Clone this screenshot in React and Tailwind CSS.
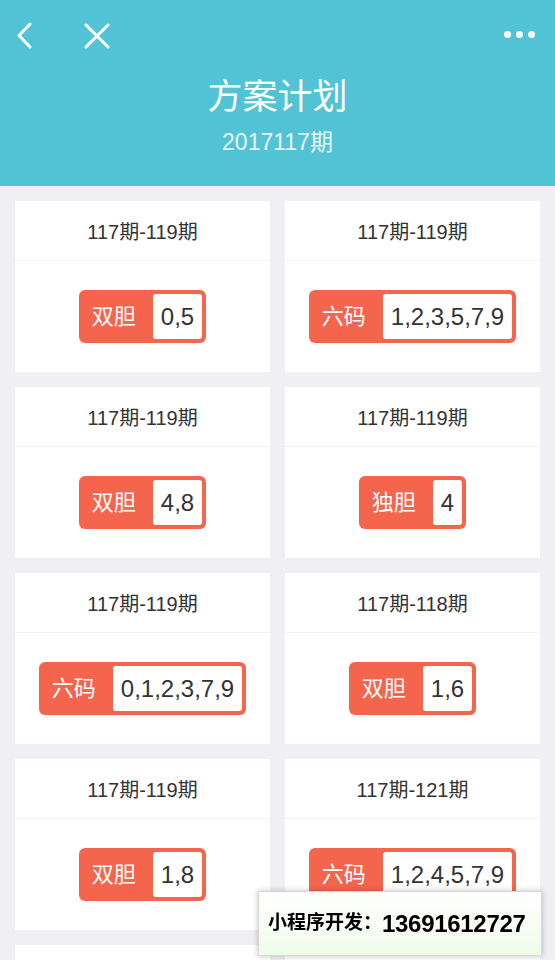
const plans = [
  { qi: "117期-119期", type: "双胆", nums: "0,5" },
  { qi: "117期-119期", type: "六码", nums: "1,2,3,5,7,9" },
  { qi: "117期-119期", type: "双胆", nums: "4,8" },
  { qi: "117期-119期", type: "独胆", nums: "4" },
  { qi: "117期-119期", type: "六码", nums: "0,1,2,3,7,9" },
  { qi: "117期-118期", type: "双胆", nums: "1,6" },
  { qi: "117期-119期", type: "双胆", nums: "1,8" },
  { qi: "117期-121期", type: "六码", nums: "1,2,4,5,7,9" },
  { qi: "117期-119期", type: "独胆", nums: "7" },
  { qi: "117期-119期", type: "双胆", nums: "2,6" },
];

function Badge({ type, nums }) {
  return (
    <div className="flex items-stretch rounded-[6px] bg-[#f5654e] p-[4px] pl-0">
      <span className="flex items-center pl-[13px] pr-[17px] text-[22px] text-white">
        {type}
      </span>
      <span className="flex h-[45px] items-center rounded-[3px] bg-white px-[8px] text-[24px] text-[#333]">
        {nums}
      </span>
    </div>
  );
}

function Card({ qi, type, nums }) {
  return (
    <div className="bg-white">
      <div className="flex h-[60px] items-center justify-center border-b border-[#f2f2f2] pt-[3px] text-[20px] text-[#333]">
        {qi}
      </div>
      <div className="flex h-[111px] items-center justify-center">
        <Badge type={type} nums={nums} />
      </div>
    </div>
  );
}

export default function App() {
  return (
    <div
      className="relative min-h-screen bg-[#efeff4]"
      style={{ fontFamily: '"Liberation Sans", "Noto Sans CJK SC", sans-serif' }}
    >
      <header className="h-[186px] bg-[#52c3d4] text-white">
        <div className="flex h-[70px] items-start justify-between px-[15px] pt-[22px]">
          <div className="flex items-center gap-[48px]">
            <svg width="20" height="28" viewBox="0 0 20 28" fill="none">
              <path d="M15 2 L4 13.5 L15 25" stroke="white" strokeWidth="3" strokeLinecap="round" strokeLinejoin="round" />
            </svg>
            <svg width="28" height="26" viewBox="0 0 28 26" fill="none">
              <path d="M3 2 L25 24 M25 2 L3 24" stroke="white" strokeWidth="3" strokeLinecap="round" />
            </svg>
          </div>
          <div className="mr-[5px] mt-[9px] flex gap-[5px]">
            <span className="h-[7px] w-[7px] rounded-full bg-white" />
            <span className="h-[7px] w-[7px] rounded-full bg-white" />
            <span className="h-[7px] w-[7px] rounded-full bg-white" />
          </div>
        </div>
        <div className="flex flex-col items-center">
          <h1 className="text-[35px] leading-[54px]">方案计划</h1>
          <p className="mt-[1px] text-[23px] text-white/85">2017117期</p>
        </div>
      </header>

      <main className="grid grid-cols-2 gap-[15px] px-[15px] pt-[15px] pb-[15px]">
        {plans.map((p, i) => (
          <Card key={i} {...p} />
        ))}
      </main>

      <div className="fixed left-[258px] top-[891px] flex h-[65px] w-[284px] items-center border border-[#d9d9d9] bg-gradient-to-b from-white to-[#effbe9] pl-[9px] shadow-[0_0_6px_rgba(0,0,0,0.25)]">
        <span className="text-[19px] font-bold text-black">小程序开发：</span>
        <span className="text-[24px] font-bold tracking-[-0.3px] text-black">13691612727</span>
      </div>
    </div>
  );
}
